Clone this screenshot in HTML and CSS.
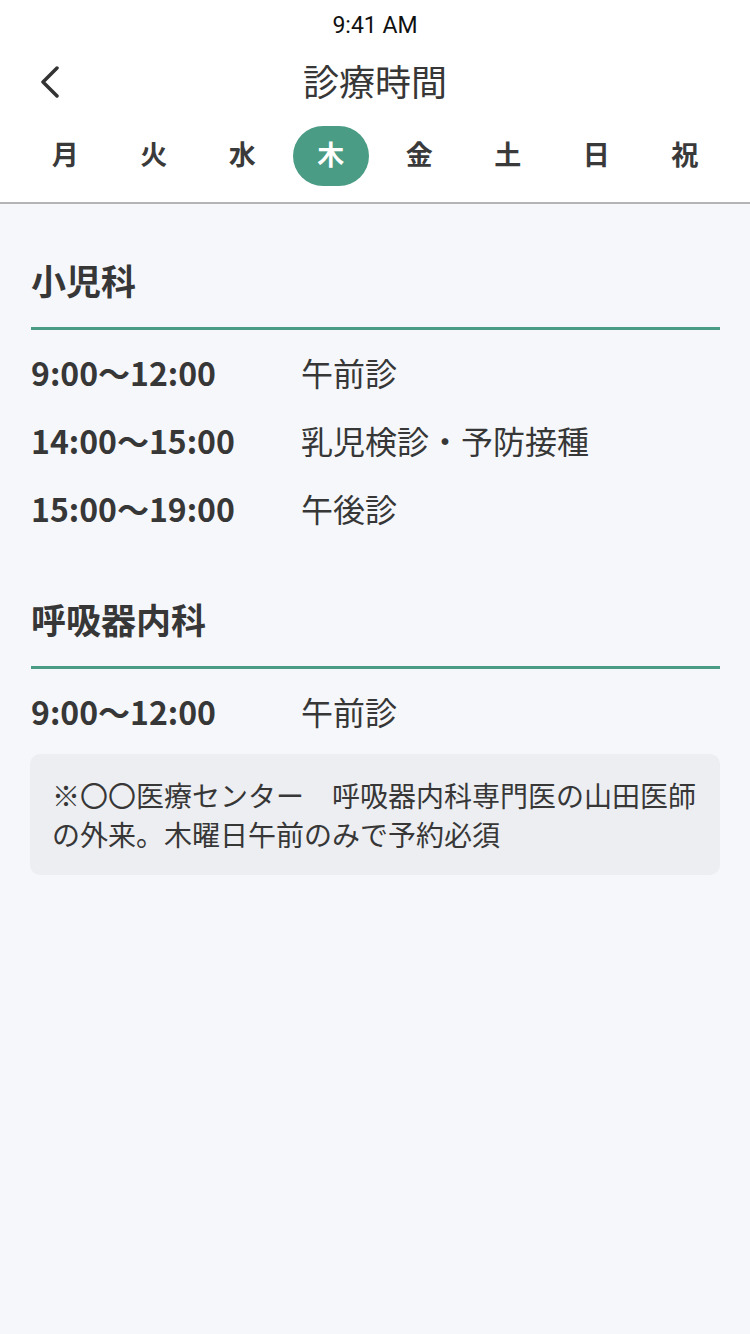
FILE: index.html
```html
<!DOCTYPE html>
<html lang="ja">
<head>
	<meta charset="UTF-8">
	<meta name="viewport" content="width=device-width, initial-scale=1.0">
	<title>診療時間</title>
	<link rel="stylesheet" href="styles.css">
</head>
<body>
	<div class="top">
		<div class="status">9:41 AM</div>
		<div class="nav">
			<a class="back" href="#">
				<svg width="24" height="32" viewBox="0 0 24 32"><path d="M19 2 L5 16 L19 30" fill="none" stroke="#333" stroke-width="3.5" stroke-linecap="round" stroke-linejoin="round"/></svg>
			</a>
			<h1>診療時間</h1>
		</div>
		<div class="days">
			<span class="day">月</span>
			<span class="day">火</span>
			<span class="day">水</span>
			<span class="day active">木</span>
			<span class="day">金</span>
			<span class="day">土</span>
			<span class="day">日</span>
			<span class="day">祝</span>
		</div>
	</div>

	<div class="content">
		<div class="dept">
			<h2>小児科</h2>
			<div class="row"><span class="time">9:00〜12:00</span><span class="desc">午前診</span></div>
			<div class="row"><span class="time">14:00〜15:00</span><span class="desc">乳児検診・予防接種</span></div>
			<div class="row"><span class="time">15:00〜19:00</span><span class="desc">午後診</span></div>
		</div>
		<div class="dept">
			<h2>呼吸器内科</h2>
			<div class="row"><span class="time">9:00〜12:00</span><span class="desc">午前診</span></div>
			<p class="note">※〇〇医療センター　呼吸器内科専門医の山田医師の外来。木曜日午前のみで予約必須</p>
		</div>
	</div>
</body>
</html>
```

FILE: styles.css
```css
html, body {
	margin: 0;
	padding: 0;
	background: #f6f7fb;
	color: #373737;
	font-family: "Noto Sans CJK JP", "Noto Sans", sans-serif;
}

.top {
	background: #fff;
	border-bottom: 2px solid #b4b4b4;
}

.status {
	height: 48px;
	padding-top: 3px;
	box-sizing: border-box;
	line-height: 45px;
	text-align: center;
	font-family: Roboto, "Liberation Sans", sans-serif;
	font-size: 23px;
	color: #111;
}

.nav {
	position: relative;
	height: 68px;
	display: flex;
	align-items: center;
	justify-content: center;
}

.back {
	position: absolute;
	left: 38px;
	top: 18px;
	display: block;
	height: 32px;
}

.nav h1 {
	margin: 0 0 4px;
	font-size: 36px;
	font-weight: 400;
	line-height: 64px;
}

.days {
	display: grid;
	grid-template-columns: repeat(8, 1fr);
	padding: 10px 21px 16px;
}

.day {
	justify-self: center;
	width: 76px;
	height: 60px;
	line-height: 56px;
	padding-bottom: 4px;
	box-sizing: border-box;
	text-align: center;
	border-radius: 30px;
	font-size: 27px;
	font-weight: 700;
	color: #3a3a3a;
}

.day.active {
	background: #4a9c84;
	color: #fff;
}

.content {
	padding: 53px 30px 0 31px;
}

.dept + .dept {
	margin-top: 52px;
}

.dept h2 {
	margin: 0 0 10px;
	font-size: 35px;
	font-weight: 700;
	line-height: 46px;
	padding-bottom: 24px;
	border-bottom: 3px solid #4a9c84;
}

.row {
	display: flex;
	align-items: center;
	height: 68px;
	padding-bottom: 4px;
	box-sizing: border-box;
	font-size: 32px;
}

.time {
	width: 270px;
	flex-shrink: 0;
	font-weight: 700;
	font-size: 32px;
}

.desc {
	font-weight: 400;
}

.note {
	margin: 7px 0 0 -1px;
	padding: 22px 22px 21px;
	background: #edeef2;
	border-radius: 10px;
	font-size: 28px;
	line-height: 39px;
}
```
